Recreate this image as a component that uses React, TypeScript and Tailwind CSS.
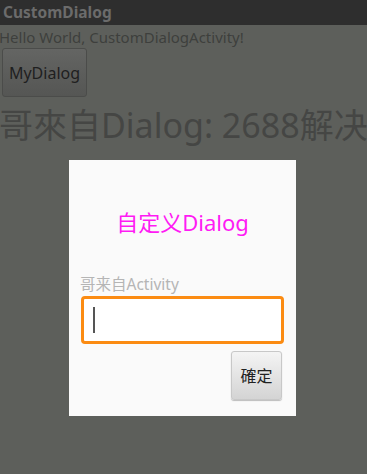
export default function App() {
  return (
    <div
      className="relative w-[367px] h-[474px] overflow-hidden bg-[#5d5f5b]"
      style={{ fontFamily: '"Noto Sans", "Noto Sans CJK SC", sans-serif' }}
    >
      {/* Title bar */}
      <div className="h-[25px] bg-[#2e2e2e] flex items-center px-[3px]">
        <span className="text-[15.5px] font-bold text-[#6b6b6b] leading-none">CustomDialog</span>
      </div>

      {/* Activity content (dimmed) */}
      <div className="flex flex-col items-start">
        <p className="text-[15px] leading-[22px] text-[#3e3f3d] -ml-[1px] mt-[1px]">Hello World, CustomDialogActivity!</p>
        <button className="ml-[2px] w-[85px] h-[49px] rounded-[3px] bg-gradient-to-b from-[#646563] to-[#555654] border border-[#4b4c4a] text-[16px] text-[#1f201f]">
          MyDialog
        </button>
        <p className="text-[34px] leading-[44px] text-[#454644] -ml-[1px] mt-[6px] whitespace-nowrap">哥來自Dialog: 2688解决</p>
      </div>

      {/* Dialog */}
      <div className="absolute left-[69px] top-[160px] w-[227px] h-[256px] bg-[#fafafa] flex flex-col px-[12px]">
        <p className="mt-[47px] text-center text-[22px] leading-[30px] text-[#ff1bf4]">自定义Dialog</p>
        <p className="mt-[37px] text-[15.5px] leading-[20px] text-[#b5b5b5] -ml-[1px]">哥来自Activity</p>
        <div className="mt-[2px] h-[48px] rounded-[4px] border-[3px] border-[#fb8b12] bg-white flex items-center px-[9px]">
          <div className="w-[2px] h-[26px] bg-[#555]" />
        </div>
        <div className="flex justify-end mt-[7px] pr-[2px]">
          <button className="w-[51px] h-[49px] rounded-[3px] bg-gradient-to-b from-[#f4f4f4] to-[#d4d4d4] border border-[#c8c8c8] shadow-[0_1px_1px_rgba(0,0,0,0.25)] text-[16px] text-[#222]">
            確定
          </button>
        </div>
      </div>
    </div>
  );
}
